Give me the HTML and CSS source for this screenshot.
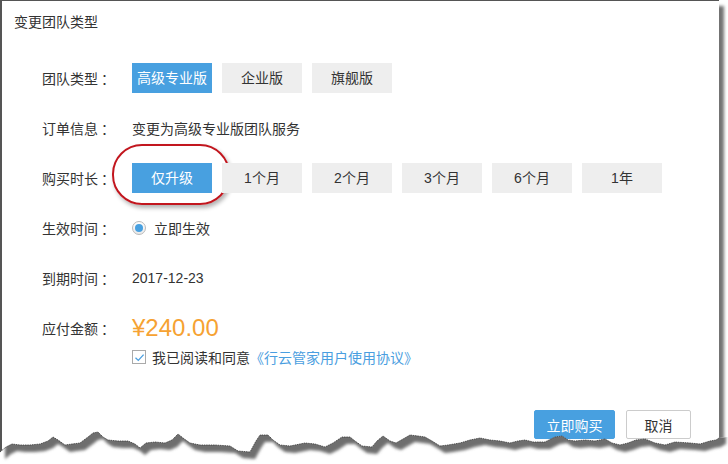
FILE: index.html
```html
<!DOCTYPE html>
<html lang="zh-CN">
<head>
    <meta charset="UTF-8">
    <title>变更团队类型</title>
    <link rel="stylesheet" href="styles.css">
</head>
<body>
    <div class="dialog">
        <div class="dialog-title">变更团队类型</div>

        <div class="form">
            <div class="row">
                <span class="label">团队类型<span class="colon">：</span></span>
                <div class="options">
                    <span class="opt active">高级专业版</span>
                    <span class="opt">企业版</span>
                    <span class="opt">旗舰版</span>
                </div>
            </div>

            <div class="row">
                <span class="label">订单信息<span class="colon">：</span></span>
                <span class="value">变更为高级专业版团队服务</span>
            </div>

            <div class="row">
                <span class="label">购买时长<span class="colon">：</span></span>
                <div class="options">
                    <span class="opt active highlighted">仅升级<i class="ring"></i></span>
                    <span class="opt">1个月</span>
                    <span class="opt">2个月</span>
                    <span class="opt">3个月</span>
                    <span class="opt">6个月</span>
                    <span class="opt">1年</span>
                </div>
            </div>

            <div class="row">
                <span class="label">生效时间<span class="colon">：</span></span>
                <label class="radio"><span class="radio-dot"></span>立即生效</label>
            </div>

            <div class="row">
                <span class="label">到期时间<span class="colon">：</span></span>
                <span class="value">2017-12-23</span>
            </div>

            <div class="row row-price">
                <span class="label">应付金额<span class="colon">：</span></span>
                <span class="price">¥240.00</span>
            </div>

            <div class="agree">
                <span class="checkbox">
                    <svg width="11" height="11" viewBox="0 0 11 11"><path d="M1.5 5.8 L4.3 8.4 L9.6 2.6" fill="none" stroke="#4a9fe0" stroke-width="1.3"/></svg>
                </span>
                我已阅读和同意<a class="link" href="#">《行云管家用户使用协议》</a>
            </div>
        </div>

        <div class="footer">
            <button class="btn btn-primary">立即购买</button>
            <button class="btn">取消</button>
        </div>

        <!-- borde rasgado del recorte -->
        <svg class="torn" width="728" height="39" viewBox="0 425 728 39">
            <defs>
                <clipPath id="below">
                    <polygon id="belowShape" points="0,452 6,447 12,444 20,445 30,445 40,444 48,441 53,437 58,440 65,445 72,444 80,443 88,437 93,433 98,432 103,437 108,440 118,441 128,441 135,444 140,448 146,443 155,442 165,443 172,440 178,434 183,438 190,443 200,445 215,445 230,446 238,451 250,452 256,441 260,435 268,435 273,440 280,445 290,446 305,443 315,444 325,447 333,443 342,437 350,437 355,441 362,446 372,447 377,441 383,436 390,441 396,443 403,439 410,435 418,436 425,437 432,441 440,446 448,445 460,443 470,440 480,438 490,440 500,441 510,443 518,441 525,440 533,442 545,442 555,437 562,436 568,440 575,441 585,440 595,441 605,439 612,443 620,445 628,443 636,440 645,439 655,443 665,445 675,442 690,443 700,444 710,441 716,440 719,438 728,437 728,464 0,464"/>
                </clipPath>
                <filter id="soft" x="-5%" y="-50%" width="110%" height="200%">
                    <feGaussianBlur stdDeviation="1.6"/>
                </filter>
            </defs>
            <use href="#belowShape" fill="#fff"/>
            <g clip-path="url(#below)">
                <polygon filter="url(#soft)" fill="#6e6e6e" points="5,420 5,459 11,454 17,451 25,452 35,452 45,451 53,448 58,444 63,447 70,452 77,451 85,450 93,444 98,440 103,439 108,444 113,447 123,448 133,448 140,451 145,455 151,450 160,449 170,450 177,447 183,441 188,445 195,450 205,452 220,452 235,453 243,458 255,459 261,448 265,442 273,442 278,447 285,452 295,453 310,450 320,451 330,454 338,450 347,444 355,444 360,448 367,453 377,454 382,448 388,443 395,448 401,450 408,446 415,442 423,443 430,444 437,448 445,453 453,452 465,450 475,447 485,445 495,447 505,448 515,450 523,448 530,447 538,449 550,449 560,444 567,443 573,447 580,448 590,447 600,448 610,446 617,450 625,452 633,450 641,447 650,446 660,450 670,452 680,449 695,450 705,451 715,448 721,447 724,445 726,444 726,420"/>
            </g>
            <polyline fill="none" stroke="#3a3a3a" stroke-width="0.8" stroke-dasharray="1.5 0.8" points="0,452 6,447 12,444 20,445 30,445 40,444 48,441 53,437 58,440 65,445 72,444 80,443 88,437 93,433 98,432 103,437 108,440 118,441 128,441 135,444 140,448 146,443 155,442 165,443 172,440 178,434 183,438 190,443 200,445 215,445 230,446 238,451 250,452 256,441 260,435 268,435 273,440 280,445 290,446 305,443 315,444 325,447 333,443 342,437 350,437 355,441 362,446 372,447 377,441 383,436 390,441 396,443 403,439 410,435 418,436 425,437 432,441 440,446 448,445 460,443 470,440 480,438 490,440 500,441 510,443 518,441 525,440 533,442 545,442 555,437 562,436 568,440 575,441 585,440 595,441 605,439 612,443 620,445 628,443 636,440 645,439 655,443 665,445 675,442 690,443 700,444 710,441 716,440 719,438"/>
        </svg>
    </div>
</body>
</html>
```

FILE: styles.css
```css
html, body {
    margin: 0;
    padding: 0;
    background: #fff;
    overflow: hidden;
}

body {
    font-family: "Liberation Sans", "Noto Sans CJK SC", sans-serif;
    font-size: 14px;
    color: #333;
}

.dialog {
    position: relative;
    width: 719px;
    height: 464px;
    box-sizing: border-box;
    background: #fff;
    border-top: 1px solid #555;
    border-left: 2px solid #555;
    box-shadow: 5px 6px 3px rgba(0, 0, 0, 0.55);
}

.dialog-title {
    height: 43px;
    line-height: 43px;
    padding-left: 12px;
    color: #333;
}

.form {
    margin-top: 19px;
    padding-left: 40px;
}

.row {
    display: flex;
    align-items: center;
    height: 30px;
    margin-bottom: 20px;
}

.row-price {
    margin-bottom: 6px;
}

.label {
    width: 90px;
    flex-shrink: 0;
}

.colon {
    margin-left: 3px;
}

.options {
    display: flex;
    gap: 10px;
}

.opt {
    position: relative;
    width: 80px;
    height: 30px;
    line-height: 30px;
    text-align: center;
    background: #eeeeee;
    color: #333;
}

.opt.active {
    background: #48a0e0;
    color: #fff;
}

/* marca roja de anotacion */
.ring {
    position: absolute;
    left: -20px;
    top: -19px;
    width: 114px;
    height: 57px;
    border: 2px solid #c2161e;
    border-radius: 30px;
    box-shadow: 2px 3px 4px rgba(0, 0, 0, 0.3);
}

.radio {
    display: flex;
    align-items: center;
    gap: 8px;
}

.radio-dot {
    position: relative;
    width: 12px;
    height: 12px;
    border: 1px solid #b9b9b9;
    border-radius: 50%;
    background: linear-gradient(#fff, #e9e9e9);
}

.radio-dot::after {
    content: "";
    position: absolute;
    left: 2px;
    top: 2px;
    width: 8px;
    height: 8px;
    border-radius: 50%;
    background: #48a0e0;
}

.price {
    font-size: 24px;
    color: #f6a232;
}

.agree {
    display: flex;
    align-items: center;
    height: 16px;
    margin-left: 90px;
}

.checkbox {
    width: 12px;
    height: 12px;
    border: 1px solid #aaa;
    margin-right: 6px;
    display: flex;
    align-items: center;
    justify-content: center;
    background: #fff;
}

.link {
    color: #4a9ee0;
    text-decoration: none;
}

.footer {
    display: flex;
    justify-content: flex-end;
    gap: 11px;
    margin-top: 45px;
    padding-right: 28px;
}

.btn {
    height: 29px;
    padding: 0;
    font-family: inherit;
    font-size: 14px;
    border-radius: 2px;
    border: 1px solid #ccc;
    background: #fff;
    color: #333;
    width: 65px;
}

.btn-primary {
    width: 81px;
    border-color: #48a0e0;
    background: #48a0e0;
    color: #fff;
}

.torn {
    position: absolute;
    left: -2px;
    top: 424px;
}
```
